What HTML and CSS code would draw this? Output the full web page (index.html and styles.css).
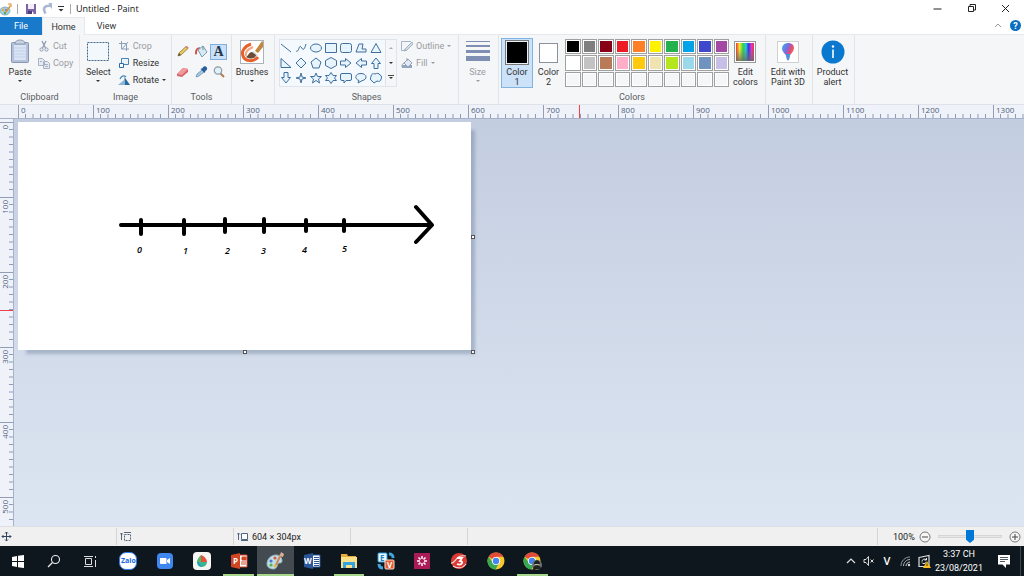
FILE: index.html
```html
<!DOCTYPE html>
<html lang="en">

<head>
  <meta charset="UTF-8">
  <meta name="viewport" content="width=device-width, initial-scale=1.0">
  <title>Untitled - Paint</title>
  <link rel="stylesheet" href="styles.css">
</head>

<body>

  <!-- title bar -->
  <header class="titlebar">
    <svg class="app-icon" width="13" height="14" viewBox="0 0 13 14">
      <ellipse cx="5" cy="9" rx="5" ry="4" fill="#a9cfe0" stroke="#6d9db5" stroke-width=".7" />
      <circle cx="3" cy="8" r="1.2" fill="#e5a73c" />
      <circle cx="5" cy="11" r="1.2" fill="#5aa845" />
      <circle cx="6" cy="8" r="1" fill="#4d79d8" />
      <path d="M6 10 11 3" stroke="#db9540" stroke-width="1.6" />
      <path d="M8 2h3v3" fill="none" stroke="#e9b468" stroke-width="1.4" />
    </svg>
    <span class="bar"></span>
    <button class="plain save" aria-label="Save">
      <svg width="12" height="12" viewBox="0 0 12 12">
        <path d="M1 1h10v10H1z" fill="#7d63a8" />
        <path d="M3 1h6v5H3z" fill="#f1eef8" />
        <path d="M3 8h6v3H3z" fill="#4b3b77" />
        <path d="M7 8.500h1.500V11H7z" fill="#fff" />
      </svg>
    </button>
    <button class="plain undo" aria-label="Undo">
      <svg width="11" height="11" viewBox="0 0 11 11">
        <path d="M3.500 10.500C0 5 3 2 9 3" fill="none" stroke="#a9b7d3" stroke-width="2.600" />
        <path d="M6.500 0H10v6.500z" fill="#a9b7d3" />
      </svg>
    </button>
    <button class="plain more" aria-label="Customize toolbar">
      <svg width="6" height="6" viewBox="0 0 6 6"><path d="M0 .5h6" stroke="#333" /><path d="M.5 3h5L3 5.500z" fill="#333" /></svg>
    </button>
    <span class="bar"></span>
    <h1>Untitled - Paint</h1>
    <div class="window-buttons">
      <button class="plain" aria-label="Minimize"><svg width="9" height="9" viewBox="0 0 9 9"><path d="M.5 5h8" stroke="#222" /></svg></button>
      <button class="plain" aria-label="Restore"><svg width="9" height="9" viewBox="0 0 9 9"><path d="M1.500 2.500h5v5h-5zM3 2V.5h5.500V6H7" fill="none" stroke="#222" /></svg></button>
      <button class="plain" aria-label="Close"><svg width="9" height="9" viewBox="0 0 9 9"><path d="m1 1 7 7M8 1 1 8" stroke="#222" /></svg></button>
    </div>
  </header>

  <!-- tabs -->
  <nav class="tabs">
    <button class="tab file">File</button>
    <button class="tab active">Home</button>
    <button class="tab">View</button>
    <div class="tabs-right">
      <button class="plain" aria-label="Collapse ribbon"><svg width="8" height="5" viewBox="0 0 8 5"><path d="m1 4 3-3 3 3" fill="none" stroke="#999" /></svg></button>
      <button class="plain help" aria-label="Help">?</button>
    </div>
  </nav>

  <!-- ribbon -->
  <div class="ribbon">
    <section class="group clipboard">
      <div class="group-body">
        <button class="big">
          <svg width="24" height="26" viewBox="0 0 24 26">
            <rect x="3.500" y="3.500" width="17" height="20" rx="1" fill="#b4c1d8" stroke="#8797b8" />
            <path d="M6 6h12v15H6z" fill="#d9e4f4" />
            <path d="M6 9h12M6 12h12M6 15h12M6 18h12" stroke="#c3d2e8" />
            <path d="M7 5c0-3 2-4 5-4s5 1 5 4z" fill="#cbd2df" stroke="#8290ad" stroke-width=".8" />
          </svg>
          <span>Paste</span><i class="caret"></i>
        </button>
        <div class="stack">
          <button class="small off">
            <svg width="12" height="12" viewBox="0 0 12 12"><path d="m4 1 3.500 7M8 1 4.500 8" stroke="#8d9bb3" stroke-width="1.300" /><circle cx="3.500" cy="9.500" r="1.600" fill="none" stroke="#8d9bb3" /><circle cx="8.500" cy="9.500" r="1.600" fill="none" stroke="#8d9bb3" /></svg>Cut</button>
          <button class="small off">
            <svg width="12" height="12" viewBox="0 0 12 12"><path d="M.5 1.500h4l2 2v5h-6zM5.500 4.500h4l2 2v5h-6z" fill="#e6ebf3" stroke="#a8b3c6" /><path d="M7 7.500h3M7 9.500h3M2 4.500h2" stroke="#a8b3c6" /></svg>Copy</button>
        </div>
      </div>
      <h2>Clipboard</h2>
    </section>

    <section class="group image">
      <div class="group-body">
        <button class="big">
          <svg width="24" height="26" viewBox="0 0 24 26"><rect x="1.500" y="3.500" width="21" height="18" fill="#f3f8fc" stroke="#3d668e" stroke-dasharray="2 1" /></svg>
          <span>Select</span><i class="caret"></i>
        </button>
        <div class="stack">
          <button class="small off">
            <svg width="12" height="12" viewBox="0 0 12 12"><path d="M3.500 1v8H11M1 3.500h7.500V11M4 9l6-7" fill="none" stroke="#8ea0b9" /></svg>Crop</button>
          <button class="small">
            <svg width="12" height="12" viewBox="0 0 12 12"><path d="M3.500 1.500h7v6h-7z" fill="#eaf4fc" stroke="#4484b8" /><path d="M1.500 6.500h4v4h-4z" fill="#fff" stroke="#2b6ca6" /></svg>Resize</button>
          <button class="small">
            <svg width="12" height="12" viewBox="0 0 12 12"><path d="M0 11h6V6z" fill="#8cb6d4" /><path d="M6.500 3v8H12z" fill="#256b9e" /><path d="M2 5c1-3 4-4 6-2" fill="none" stroke="#3c88bc" stroke-width="1.200" /></svg>Rotate<i class="caret"></i></button>
        </div>
      </div>
      <h2>Image</h2>
    </section>

    <section class="group tools">
      <div class="group-body tool-grid">
        <button class="tool" aria-label="Pencil"><svg width="14" height="14" viewBox="0 0 14 14"><path d="m2 12 1-3 7-6.500 2 2L5 11z" fill="#e8c95e" stroke="#947738" stroke-width=".8" /><path d="m2 12 1-3 2 2z" fill="#554" /><path d="m9.500 3 1.500-1 1.500 1.500-1 1.500z" fill="#cf7d74" /></svg></button>
        <button class="tool" aria-label="Fill with color"><svg width="14" height="14" viewBox="0 0 14 14"><path d="m4 6 5-4 4 6-5 5z" fill="#d7eaf4" stroke="#6892ab" stroke-width=".9" /><path d="M9 2V6M6 4c-3-1-4 2-4 6" stroke="#6892ab" fill="none" /><path d="M6 4C3 3 1 5 1 9c0 2 2 2 2 0 0-3 1-4 3-5z" fill="#d85145" /></svg></button>
        <button class="tool picked letter" aria-label="Text">A</button>
        <button class="tool" aria-label="Eraser"><svg width="14" height="14" viewBox="0 0 14 14"><path d="m1 9 6-6 5 1v3L6 12l-5-1z" fill="#d9646b" /><path d="m1 9 6-6 5 1-6 6z" fill="#ef9a9c" /></svg></button>
        <button class="tool" aria-label="Color picker"><svg width="14" height="14" viewBox="0 0 14 14"><path d="m2 12 1-3 5-4 2 2-5 4z" fill="#a8cae1" stroke="#5b88ad" stroke-width=".7" /><path d="m6.500 4 4 4 1-2c2-1 2-3 1-4s-3-1-4 1z" fill="#2a5f9c" /></svg></button>
        <button class="tool" aria-label="Magnifier"><svg width="14" height="14" viewBox="0 0 14 14"><path d="m8 8 4 4" stroke="#b07c52" stroke-width="2" /><circle cx="6" cy="5.500" r="3.700" fill="#e1f0f9" stroke="#8b9aa8" stroke-width="1.200" /></svg></button>
      </div>
      <h2>Tools</h2>
    </section>

    <section class="group brushes">
      <div class="group-body">
        <button class="big">
          <svg width="24" height="26" viewBox="0 0 24 26">
            <rect x=".5" y="1.500" width="23" height="23" fill="#fff" stroke="#a9b4bf" />
            <path d="M11 5C5 7 1 12 3 17c2 6 11 6 15 1" fill="none" stroke="#e8612c" stroke-width="3" />
            <path d="M13 8c-5 2-8 5-7 9" fill="none" stroke="#f5a47e" stroke-width="2" />
            <path d="m15 12 7-10 1 1v5l-5 6z" fill="#c4853c" />
            <path d="m13 12 5 4-2 2-4-4z" fill="#d4d8dc" />
            <path d="M12 13c-3 0-3 3-6 5 5 3 10 1 10-2z" fill="#6b4c38" />
          </svg>
          <span>Brushes</span><i class="caret"></i>
        </button>
      </div>
    </section>

    <section class="group shapes">
      <div class="group-body">
        <div class="gallery">
          <div class="shape-grid" id="shapes"></div>
          <div class="gallery-scroll">
            <button class="plain" aria-label="Previous row"><i class="caret up"></i></button>
            <button class="plain" aria-label="Next row"><i class="caret"></i></button>
            <button class="plain" aria-label="All shapes"><i class="caret lined"></i></button>
          </div>
        </div>
        <div class="stack">
          <button class="small off">
            <svg width="12" height="12" viewBox="0 0 12 12"><path d="M10 1.500H.5v9h5" fill="none" stroke="#a5b4c8" /><path d="m4 9 7-7 1 2-6 6-3 1z" fill="#d3dce8" stroke="#92a3bb" stroke-width=".8" /></svg>Outline<i class="caret"></i></button>
          <button class="small off">
            <svg width="12" height="12" viewBox="0 0 12 12"><path d="M1 8h10v3H1z" fill="#92a6c2" /><path d="m3 6 4-4 4 4-4 4z" fill="#e3eaf3" stroke="#92a3bb" /><path d="M6 4V1M3 6C1 7 1 8 1 10" fill="none" stroke="#92a3bb" /></svg>Fill<i class="caret"></i></button>
        </div>
      </div>
      <h2>Shapes</h2>
    </section>

    <section class="group size">
      <div class="group-body">
        <button class="big off">
          <svg width="24" height="26" viewBox="0 0 24 26"><path d="M0 2h24v1H0zM0 6h24v2H0zM0 11h24v3H0zM0 17h24v5H0z" fill="#7e8fb3" /></svg>
          <span>Size</span><i class="caret"></i>
        </button>
      </div>
    </section>

    <section class="group colors">
      <div class="group-body">
        <button class="big color-slot chosen"><span class="well first"></span><span>Color</span><span>1</span></button>
        <button class="big color-slot"><span class="well second"></span><span>Color</span><span>2</span></button>
        <div class="palette" id="palette"></div>
        <button class="big edit">
          <svg width="24" height="26" viewBox="0 0 24 26">
            <defs>
              <linearGradient id="hue"><stop offset="0" stop-color="#e33" /><stop offset=".2" stop-color="#ee3" /><stop offset=".4" stop-color="#3c4" /><stop offset=".55" stop-color="#2cd" /><stop offset=".7" stop-color="#33d" /><stop offset=".85" stop-color="#d3c" /><stop offset="1" stop-color="#e34" /></linearGradient>
              <linearGradient id="fade" x2="0" y2="1"><stop offset=".3" stop-color="#777" stop-opacity="0" /><stop offset="1" stop-color="#666" stop-opacity=".8" /></linearGradient>
            </defs>
            <rect x="1.500" y="2.500" width="21" height="21" fill="#fff" stroke="#999" />
            <path d="M3 4h18v18H3z" fill="url(#hue)" /><path d="M3 4h18v18H3z" fill="url(#fade)" />
          </svg>
          <span>Edit</span><span>colors</span>
        </button>
      </div>
      <h2>Colors</h2>
    </section>

    <section class="group paint3d">
      <div class="group-body">
        <button class="big">
          <svg width="24" height="26" viewBox="0 0 24 26">
            <defs><linearGradient id="drop" x1="0" y1="0" x2="1" y2=".6"><stop offset="0" stop-color="#29b8ee" /><stop offset=".45" stop-color="#7b6ae0" /><stop offset=".7" stop-color="#e34a7a" /><stop offset="1" stop-color="#f57c45" /></linearGradient></defs>
            <rect x="1.500" y="2.500" width="21" height="21" fill="#fff" stroke="#d0d0d0" />
            <path d="M12 4c-4 0-6 3-6 5.500 0 3 3 5 4 7l1 4c0 1 2 1 2 0l1-4c1-2 4-4 4-7.500S15.500 4 12 4z" fill="url(#drop)" />
            <path d="m10 15 4 0-1 5.500c0 1-2 1-2 0z" fill="#3a9be8" />
          </svg>
          <span>Edit with</span><span>Paint 3D</span>
        </button>
      </div>
    </section>

    <section class="group alert">
      <div class="group-body">
        <button class="big">
          <svg width="24" height="26" viewBox="0 0 24 26"><circle cx="12" cy="13" r="11.500" fill="#0a78cf" /><circle cx="12" cy="7.500" r="1.200" fill="#fff" /><path d="M12 10.500V19" stroke="#fff" stroke-width="1.600" /></svg>
          <span>Product</span><span>alert</span>
        </button>
      </div>
    </section>
  </div>

  <!-- rulers and canvas -->
  <div class="ruler across" id="across"><i class="pointer"></i></div>
  <main class="workspace">
    <div class="ruler down" id="down"><i class="pointer"></i></div>
    <div class="desk">
      <div class="canvas">
        <svg width="453" height="228" viewBox="0 0 453 228">
          <g fill="none" stroke="#000" stroke-width="4" stroke-linecap="round" stroke-linejoin="round">
            <path d="M103 103h310M398 85l16 18-16 17" />
            <path d="M123 98v14M166 98v14M207 97v13M246 97v13M288 98v11M326 98v11" />
          </g>
          <g class="numbers">
            <text x="119" y="131">0</text>
            <text x="165" y="132">1</text>
            <text x="207" y="132">2</text>
            <text x="243" y="132">3</text>
            <text x="284" y="131">4</text>
            <text x="324" y="130">5</text>
          </g>
        </svg>
        <i class="handle right"></i>
        <i class="handle bottom"></i>
        <i class="handle corner"></i>
      </div>
    </div>
  </main>

  <!-- status bar -->
  <footer class="status">
    <div class="cell"><svg width="11" height="11" viewBox="0 0 11 11"><path d="M5.500 1v9M1 5.500h9M4 2.500 5.500 1 7 2.500M4 8.500 5.500 10 7 8.500M2.500 4 1 5.500 2.500 7M8.500 4 10 5.500 8.500 7" fill="none" stroke="#34465c" /></svg></div>
    <div class="cell"><svg width="12" height="12" viewBox="0 0 12 12"><path d="M1.500 9V2M0 3.500 1.500 2 3 3.500M4 1.500h7" fill="none" stroke="#53657a" /><path d="M4.500 3.500h6v6h-6z" fill="none" stroke="#53657a" stroke-dasharray="2 1" /></svg></div>
    <div class="cell"><svg width="12" height="12" viewBox="0 0 12 12"><path d="M1.500 9V2M0 3.500 1.500 2 3 3.500" fill="none" stroke="#53657a" /><path d="M4.500 2.500h6v6h-6z" fill="#fff" stroke="#4c6886" /><path d="M4 9.500h7" stroke="#53657a" /></svg>604 × 304px</div>
    <div class="cell"></div>
    <div class="cell wide"></div>
    <div class="zoom">
      <label for="zoom">100%</label>
      <button class="plain" aria-label="Zoom out"><svg width="12" height="12" viewBox="0 0 12 12"><circle cx="6" cy="6" r="5" fill="#f7f7f7" stroke="#777" /><path d="M3 6h6" stroke="#444" /></svg></button>
      <input type="range" id="zoom" min="0" max="100" value="50">
      <button class="plain" aria-label="Zoom in"><svg width="12" height="12" viewBox="0 0 12 12"><circle cx="6" cy="6" r="5" fill="#f7f7f7" stroke="#777" /><path d="M3 6h6M6 3v6" stroke="#444" /></svg></button>
    </div>
  </footer>

  <!-- taskbar -->
  <nav class="taskbar">
    <div class="system">
      <button class="task" aria-label="Start"><svg width="14" height="14" viewBox="0 0 14 14"><path d="M1 3l5-1v5H1zM7 1.800l6-.8v6H7zM1 8h5v5l-5-1zM7 8h6v6l-6-.8z" fill="#fff" /></svg></button>
      <button class="task" aria-label="Search"><svg width="14" height="14" viewBox="0 0 14 14"><circle cx="8.500" cy="5.500" r="4" fill="none" stroke="#eee" stroke-width="1.100" /><path d="m5.500 8.500-4.500 4.500" stroke="#eee" stroke-width="1.200" /></svg></button>
      <button class="task" aria-label="Task view"><svg width="14" height="14" viewBox="0 0 14 14"><path d="M2.500 4.500h6v6h-6zM1 2.500h9M1 12.500h9M12.500 2v2M12.500 6v7" fill="none" stroke="#ddd" /></svg></button>
    </div>
    <div class="apps">
      <button class="task"><span class="zalo">Zalo</span></button>
      <button class="task" aria-label="Zoom"><svg width="18" height="18" viewBox="0 0 18 18"><rect x="1" y="1" width="16" height="16" rx="4" fill="#3f86ee" /><path d="M4 6h5.500q1 0 1 1v5H5q-1 0-1-1zM11 8l3-2v6l-3-2z" fill="#fff" /></svg></button>
      <button class="task" aria-label="Color app"><svg width="18" height="18" viewBox="0 0 18 18"><rect width="18" height="18" rx="4" fill="#f6f6f4" /><path d="M8 3c-3 3-4 5-4 7h5z" fill="#4dba6c" /><path d="M8 3c3 1 6 4 6 7H8z" fill="#e8513d" /><path d="M4 10h5v5c-3 0-5-2-5-5z" fill="#28a2b0" /><path d="M9 15a5 5 0 0 0 5-5H6z" fill="#3bb591" /></svg></button>
      <button class="task open" aria-label="PowerPoint"><svg width="18" height="18" viewBox="0 0 18 18"><path d="M8 3h9v12H8z" fill="#fff" stroke="#d14424" /><path d="M12 5h4v3h-4zM11 10h5M11 12h5" fill="#d14424" stroke="#d14424" /><path d="m1 3 9-2v16l-9-2z" fill="#d14424" /><text x="3" y="12" class="office">P</text></svg></button>
      <button class="task open current" aria-label="Paint"><svg width="20" height="20" viewBox="0 0 20 20"><path d="M2 13c0-5 4-9 9-9 4 0 6 3 6 6 0 2-2 2-3 2-2 0-1 5-5 6-4 0-7-2-7-5z" fill="#bfdde6" stroke="#93b5c4" /><circle cx="6" cy="10" r="1.600" fill="#4c76cd" /><circle cx="10" cy="7" r="1.600" fill="#da5848" /><circle cx="6" cy="14" r="1.600" fill="#59b04c" /><circle cx="10" cy="15" r="1.400" fill="#e6b93b" /><path d="m11 14 5-11" stroke="#cd8856" stroke-width="2" /><path d="m15 5 1-4 3 2-1 3z" fill="#ddb09a" /></svg></button>
      <button class="task" aria-label="Word"><svg width="18" height="18" viewBox="0 0 18 18"><path d="M8 3h9v12H8z" fill="#fff" stroke="#2b579a" /><path d="M11 5.500h5M11 7.500h5M11 9.500h5M11 11.500h5M11 13.500h5" stroke="#2b579a" /><path d="m1 3 9-2v16l-9-2z" fill="#2b579a" /><text x="1" y="12" class="office">W</text></svg></button>
      <button class="task open" aria-label="File Explorer"><svg width="18" height="18" viewBox="0 0 18 18"><path d="M1 2h6l1 2h8v3H1z" fill="#e6ad3d" /><path d="M1 5h16v11H1z" fill="#fbe08a" /><path d="M3 10h12v6h-3v-3H6v3H3z" fill="#33a4dd" /></svg></button>
      <button class="task" aria-label="EVKey"><svg width="18" height="18" viewBox="0 0 18 18"><path d="M12 2c4 0 4 2 4 4M2 12c0 3 2 4 4 4" fill="none" stroke="#3da7de" stroke-width="3" /><rect x="1" y="1" width="9" height="9" rx="1" fill="#eef8ff" stroke="#299bd6" /><rect x="8" y="8" width="9" height="9" rx="1" fill="#e55a32" stroke="#f8ddce" /><text x="3" y="9" class="key-e">E</text><text x="10" y="16" class="key-v">V</text></svg></button>
      <button class="task" aria-label="Screen tool"><svg width="18" height="18" viewBox="0 0 18 18"><path d="M1 1h16v16H1z" fill="#ac1b58" /><path d="M9 4v3M9 11v3M4 9h3M11 9h3M5.500 5.500l2 2M10.500 10.500l2 2M12.500 5.500l-2 2M7.500 10.500l-2 2" stroke="#fff" stroke-width="1.500" /></svg></button>
      <button class="task" aria-label="Garena"><svg width="18" height="18" viewBox="0 0 18 18"><circle cx="9" cy="9" r="8" fill="#db3a35" /><path d="M1 11C6 12 5 2 16 4M3 14c5 3 10 2 13-2" fill="none" stroke="#f6d8ce" stroke-width="1.200" /><path d="M7 6h5L10 9c4 0 2 5-3 3" fill="none" stroke="#fff" stroke-width="1.800" /></svg></button>
      <button class="task" aria-label="Chrome"><svg width="18" height="18" viewBox="0 0 18 18"><g id="chrome"><circle cx="9" cy="9" r="8.500" fill="#f7c92f" /><path d="M9 9 1.600 4.800A8.500 8.500 0 0 1 16.400 4.800H9z" fill="#e04b3b" /><path d="M1.600 4.800A8.500 8.500 0 0 0 8.500 17.500L12 11 9 9 6 11z" fill="#38a853" /><circle cx="9" cy="9" r="4" fill="#fff" /><circle cx="9" cy="9" r="3.200" fill="#4285f4" /></g></svg></button>
      <button class="task open" aria-label="Chrome profile"><svg width="20" height="18" viewBox="0 0 20 18"><use href="#chrome" /><circle cx="14" cy="13" r="5" fill="#6d746f" /><path d="M10 17c0-5 8-5 8 0z" fill="#20221f" /><path d="M11 12c0-5 6-5 6 0z" fill="#20221f" /><path d="M12 12h4v1h-4z" fill="#c3b29f" /></svg></button>
    </div>
    <div class="tray">
      <button class="plain" aria-label="Show hidden icons"><svg width="12" height="12" viewBox="0 0 12 12"><path d="m2 8 4-4 4 4" fill="none" stroke="#ddd" stroke-width="1.200" /></svg></button>
      <button class="plain" aria-label="Volume muted"><svg width="12" height="12" viewBox="0 0 12 12"><path d="M1 4.500h2l2.500-3v9L3 7.500H1zM7.500 4.500l3 3M10.500 4.500l-3 3" fill="none" stroke="#ddd" /></svg></button>
      <button class="plain input-mode">V</button>
      <button class="plain" aria-label="Network"><svg width="12" height="12" viewBox="0 0 12 12"><g fill="none" stroke="#8c9499"><path d="M2 11C2 6 6 2 11 2" /><path d="M4.500 11C4.500 7.500 7.500 4.500 11 4.500" stroke="#bbb" /><path d="M7 11c0-2 2-4 4-4" stroke="#ddd" /></g><circle cx="10" cy="10" r="1.200" fill="#ddd" /></svg></button>
      <button class="plain" aria-label="Sync warning"><svg width="14" height="14" viewBox="0 0 14 14"><path d="M2 3.500 12 1.500v11H2z" fill="none" stroke="#ddd" stroke-width="1.200" /><path d="M9 5.500c-2-1-4 0-4 2M5 8.500c1 2 3 1 4 0M9.500 4v2h-2" fill="none" stroke="#eee" /><path d="m10 7 4 7H6z" fill="#f7bd20" /><path d="M10 9.500V12" stroke="#463300" /></svg></button>
      <time class="clock" datetime="2021-08-23T15:37"><span>3:37 CH</span><span>23/08/2021</span></time>
      <button class="plain notes" aria-label="Notifications"><svg width="14" height="14" viewBox="0 0 14 14"><path d="M1 1h12v9.500H9V14l-3.500-3.500H1z" fill="#fff" /><path d="M3 3.500h8M3 5.500h8M3 7.500h5" stroke="#253038" stroke-width=".8" /></svg></button>
    </div>
  </nav>

  <script>
    const shapes = [
      ['Line', 'M1 2l10 8'],
      ['Curve', 'M1 9c3 2 3-7 5-4s3 4 5-3'],
      ['Oval', 'M.5 6a5.500 4 0 1 0 11 0a5.500 4 0 1 0-11 0'],
      ['Rectangle', 'M.5 1.500h11v9H.5z'],
      ['Rounded rectangle', 'M2.500 1.500h7q2 0 2 2v5q0 2-2 2h-7q-2 0-2-2v-5q0-2 2-2z'],
      ['Polygon', 'M4 2h4L7 7h4v3H1z'],
      ['Triangle', 'M6 1.500l5 9H1z'],
      ['Right triangle', 'M1 1.500V10.500h10z'],
      ['Diamond', 'M6 1l5 5-5 5-5-5z'],
      ['Pentagon', 'M6 1l5 4-2 6H3L1 5z'],
      ['Hexagon', 'M6 .5l5.500 3v5L6 11.500.5 8.500v-5z'],
      ['Right arrow', 'M.5 4h5V1.500L11 6l-5.500 4.500V8h-5z'],
      ['Left arrow', 'M11.500 4h-5V1.500L1 6l5.500 4.500V8h5z'],
      ['Up arrow', 'M4 11.500v-5H1.500L6 1l4.500 5.500H8v5z'],
      ['Down arrow', 'M4 .5v5H1.500L6 11l4.500-5.500H8v-5z'],
      ['Four-point star', 'M6 1l1 4 4 1-4 1-1 4-1-4-4-1 4-1z'],
      ['Five-point star', 'M6 1l1.500 3.500H11.500L8.500 7l1 4L6 8.500 2.500 11l1-4L.5 4.500h4z'],
      ['Six-point star', 'M6 .5l2 3h3.500L9.500 6l2 2.500H8l-2 3-2-3H.5L2.500 6l-2-2.500H4z'],
      ['Rounded callout', 'M2 1.500h8q1.500 0 1.500 1.500v4q0 1.500-1.500 1.500H6l-2 2.500v-2.500H2Q.5 8.500.5 7V3Q.5 1.500 2 1.500z'],
      ['Oval callout', 'M4 8.500C-1 7 0 1.500 6 1.500s7 6 1 7.200L3 11z'],
      ['Cloud callout', 'M2 9c-2-1-2-3-1-4C1 2 3 1 5 2c2-1 4-1 5 1 2 1 2 3 1 4 0 2-2 3-4 2L4 11z']
    ]

    document.querySelector('#shapes').innerHTML = shapes.map(([name, d]) =>
      `<button class="shape" aria-label="${name}"><svg width="12" height="12" viewBox="0 0 12 12"><path d="${d}"/></svg></button>`).join('')

    const colors = [
      '#000000', '#7f7f7f', '#880015', '#ed1c24', '#ff7f27', '#fff200', '#22b14c', '#00a2e8', '#3f48cc', '#a349a4',
      '#ffffff', '#c3c3c3', '#b97a57', '#ffaec9', '#ffc90e', '#efe4b0', '#b5e61d', '#99d9ea', '#7092be', '#c8bfe7'
    ]

    // last row holds the custom colors, still empty
    let swatches = ''
    for (let i = 0; i < 30; i++) {
      swatches += `<button class="swatch" aria-label="Color ${i + 1}" style="background-color:${colors[i] || '#f5f6f7'}"></button>`
    }
    document.querySelector('#palette').innerHTML = swatches

    // one ruler mark every 100 units, 9 small ticks in between
    function drawRuler(id, vertical) {
      const ruler = document.querySelector(id)
      const length = vertical ? ruler.clientHeight : ruler.clientWidth
      let marks = ''
      for (let i = 0; i * 75 < length - 30; i++) {
        let d = ''
        for (let j = 1; j < 10; j++) {
          d += vertical ? `M0 ${j * 7.5}h4` : `M${j * 7.5} 0v4`
        }
        const size = vertical ? 'width="4" height="75"' : 'width="75" height="4"'
        marks += `<div class="mark"><span>${i * 100}</span><svg ${size}><path d="${d}"/></svg></div>`
      }
      ruler.insertAdjacentHTML('beforeend', marks)
    }
    drawRuler('#across', false)
    drawRuler('#down', true)
  </script>
</body>

</html>
```
FILE: styles.css
```css
* {
  box-sizing: border-box;
  margin: 0;
  padding: 0;
}

body {
  display: flex;
  flex-direction: column;
  height: 100vh;
  overflow: hidden;
  background: #fff;
  color: #333;
  font-family: "Open Sans", "Noto Sans", sans-serif;
  font-size: 8px;
  line-height: 10px;
}

button {
  border: 0;
  background: none;
  color: inherit;
  font: inherit;
}

svg {
  display: block;
  flex: none;
}

h1,
h2 {
  font-size: 9px;
  font-weight: 400;
}

.plain {
  display: flex;
  align-items: center;
  justify-content: center;
}

/* title bar */
.titlebar {
  display: flex;
  flex: none;
  align-items: center;
  height: 17px;
}

.titlebar h1 {
  margin-left: 5px;
  color: #111;
}

.bar {
  width: 1px;
  height: 10px;
  margin-left: 4px;
  background: #aaa;
}

.save {
  margin-left: 7px;
}

.undo {
  margin-left: 5px;
}

.more {
  margin: 0 2px 0 5px;
}

.window-buttons {
  display: flex;
  margin: 0 2px 0 auto;
}

.window-buttons button {
  width: 34px;
  height: 16px;
}

/* tabs */
.tabs {
  display: flex;
  flex: none;
  height: 18px;
  border-bottom: 1px solid #e6e8eb;
  font: 9px/10px Roboto, sans-serif;
}

.tab {
  width: 43px;
  height: 18px;
}

.file {
  width: 42px;
  background: #1979ca;
  color: #fff;
}

.active {
  border: 1px solid #e6e8eb;
  border-bottom: 0;
  background: #f5f6f7;
}

.tabs-right {
  display: flex;
  align-items: center;
  gap: 8px;
  margin-left: auto;
  padding-right: 3px;
}

.help {
  width: 11px;
  height: 11px;
  border-radius: 50%;
  background: #0a6fc2;
  color: #fff;
  font-weight: 700;
}

/* ribbon */
.ribbon {
  display: flex;
  flex: none;
  height: 69px;
  background: #f5f6f7;
  font: 9px/10px Roboto, sans-serif;
}

.group {
  display: flex;
  flex: none;
  flex-direction: column;
  border-right: 1px solid #e2e4e7;
}

.group-body {
  display: flex;
  flex: 1;
  align-items: flex-start;
  padding-top: 3px;
}

.group h2 {
  height: 12px;
  color: #5a5d63;
  text-align: center;
}

.big {
  display: flex;
  flex-direction: column;
  align-items: center;
  padding-top: 1px;
}

.big svg {
  margin-bottom: 2px;
}

.off {
  color: #999ca3;
}

.caret {
  display: block;
  margin-top: 3px;
  border: 2px solid transparent;
  border-top-color: currentColor;
  border-bottom: 0;
}

.stack {
  display: flex;
  flex-direction: column;
  margin-left: 6px;
  gap: 1px;
}

.small {
  display: flex;
  align-items: center;
  gap: 3px;
  height: 16px;
}

.small .caret {
  margin-top: 0;
}

.clipboard {
  width: 80px;
  padding-left: 8px;
}

.clipboard h2 {
  margin-left: -8px;
}

.image {
  width: 92px;
  padding-left: 6px;
}

.image h2 {
  margin-left: -6px;
}

.image .stack {
  margin-left: 7px;
}

.tools {
  width: 60px;
}

.tool-grid {
  display: grid;
  grid-template-columns: repeat(3, 17px);
  grid-auto-rows: 17px;
  gap: 4px 1px;
  padding: 9px 0 0 2px;
}

.tool {
  display: grid;
  place-items: center;
}

.picked {
  border: 1px solid #7eb1e3;
  background: #c9e0f7;
}

.letter {
  color: #23364f;
  font: 700 14px/14px "Liberation Serif", serif;
}

.brushes {
  width: 43px;
  padding-right: 2px;
}

.brushes .group-body,
.size .group-body,
.paint3d .group-body,
.alert .group-body {
  justify-content: center;
}

.shapes {
  width: 184px;
}

.shapes .group-body {
  padding-left: 4px;
}

.shapes .stack {
  margin-left: 4px;
}

.gallery {
  display: flex;
  height: 48px;
  margin-top: 1px;
  border: 1px solid #dfe4ea;
  background: #f3f9fd;
}

.shape-grid {
  display: grid;
  grid-template-columns: repeat(7, 15px);
  grid-template-rows: repeat(3, 15px);
}

.shape {
  display: grid;
  place-items: center start;
}

.shape path {
  fill: #e8f4fc;
  stroke: #3f6f9e;
}

.shape:first-child path,
.shape:nth-child(2) path {
  fill: none;
}

.gallery-scroll {
  display: grid;
  width: 11px;
  border-left: 1px solid #dfe4ea;
  background: #f5f6f7;
}

.gallery-scroll .caret {
  margin: 0;
}

.gallery-scroll .up {
  border: 2px solid transparent;
  border-top: 0;
  border-bottom-color: #aaa;
}

.lined::before {
  content: "";
  display: block;
  width: 6px;
  height: 1px;
  margin: -4px -3px 0;
  background: #444;
}

.size {
  width: 40px;
  padding-right: 2px;
}

.colors {
  width: 267px;
}

.color-slot {
  width: 32px;
  height: 50px;
  margin-left: 2px;
  border: 1px solid transparent;
}

.color-slot + .color-slot {
  width: 31px;
  margin-left: 0;
}

.chosen {
  border-color: #82b3e3;
  background: #cbe2f8;
}

.well {
  border: 1px solid #8b929b;
  outline: 0;
  background: #fff;
}

.first {
  width: 24px;
  height: 25px;
  margin-bottom: 2px;
  border-color: #777;
  box-shadow: inset 0 0 0 1px #e9f2fb;
  background: #000;
}

.second {
  width: 19px;
  height: 20px;
  margin: 3px 0 4px;
}

.palette {
  display: grid;
  grid-template-columns: repeat(10, 1fr);
  grid-template-rows: repeat(3, 1fr);
  gap: 1px;
  width: 164px;
  height: 48px;
  margin: 1px 0 0 1px;
}

.swatch {
  border: 1px solid #a0a0a0;
  box-shadow: inset 0 0 0 1px #fff;
}

.edit {
  margin-left: 4px;
}

.paint3d {
  width: 47px;
  padding-right: 2px;
}

.alert {
  width: 42px;
  padding-right: 2px;
}

/* rulers */
.ruler {
  position: relative;
  display: flex;
  flex: none;
  overflow: hidden;
  background: #f0f2f9;
  color: #4d5f7c;
}

.mark {
  position: relative;
  flex: none;
}

.mark svg {
  position: absolute;
  right: 0;
  bottom: 0;
}

.mark path {
  stroke: #8e9bb5;
}

.pointer {
  position: absolute;
  z-index: 1;
  background: #f04048;
}

.across {
  height: 15px;
  padding-left: 18px;
  border-top: 1px solid #dfe2e8;
  border-bottom: 1px solid #a6b2c9;
}

.across .mark {
  width: 75px;
  padding-left: 2px;
  border-left: 1px solid #929eb5;
}

.across .pointer {
  top: 0;
  left: 579px;
  width: 1px;
  height: 14px;
}

.down {
  flex-direction: column;
  width: 14px;
  padding-top: 3px;
  border-right: 1px solid #a6b2c9;
}

.down .mark {
  height: 75px;
  padding-top: 2px;
  border-top: 1px solid #929eb5;
}

/* numbers read from bottom to top */
.down span {
  display: block;
  width: 10px;
  writing-mode: vertical-rl;
  transform: rotate(180deg);
}

.down .pointer {
  top: 191px;
  left: 0;
  width: 14px;
  height: 1px;
}

/* canvas */
.workspace {
  display: flex;
  flex: 1;
  min-height: 0;
}

.desk {
  flex: 1;
  padding: 3px 0 0 4px;
  background: linear-gradient(#c3cde0, #dce6f2);
}

.canvas {
  position: relative;
  width: 453px;
  background: #fff;
  box-shadow: 6px 6px 3px -2px rgba(90, 108, 140, .35);
}

.numbers {
  fill: #000;
  font: italic 600 9px "Open Sans", sans-serif;
}

.handle {
  position: absolute;
  width: 4px;
  height: 4px;
  border: 1px solid #555;
  background: #fff;
}

.right {
  top: 113px;
  right: -4px;
}

.bottom {
  bottom: -4px;
  left: 225px;
}

.corner {
  right: -4px;
  bottom: -4px;
}

/* status bar */
.status {
  display: flex;
  flex: none;
  align-items: center;
  height: 20px;
  border-top: 1px solid #dcdfe3;
  background: #f0f0f0;
  color: #222;
  font: 9px/10px Roboto, sans-serif;
}

.cell {
  display: flex;
  align-items: center;
  gap: 3px;
  width: 117px;
  height: 17px;
  padding-left: 3px;
  border-right: 1px solid #d5d5d5;
}

.cell:first-child {
  padding-left: 1px;
}

.wide {
  flex: 1;
}

.zoom {
  display: flex;
  align-items: center;
  padding: 0 3px 0 15px;
}

.zoom label {
  width: 26px;
}

.zoom input {
  width: 64px;
  height: 14px;
  margin: 0 7px;
  background: none;
  appearance: none;
}

.zoom input::-webkit-slider-runnable-track {
  height: 3px;
  border: 1px solid #d6d6d6;
  background: #e7e7e7;
}

.zoom input::-webkit-slider-thumb {
  width: 8px;
  height: 13px;
  margin-top: -6px;
  background: #0078d7;
  appearance: none;
  clip-path: polygon(0 0, 100% 0, 100% 75%, 50% 100%, 0 75%);
}

/* taskbar */
.taskbar {
  display: flex;
  flex: none;
  height: 30px;
  background: #0d171d;
  color: #fff;
}

.system {
  display: grid;
  grid-template-columns: repeat(3, 36px);
}

.apps {
  display: grid;
  grid-template-columns: repeat(12, 1fr);
  width: 441px;
  margin-left: 2px;
}

.task {
  position: relative;
  display: grid;
  place-items: center;
}

.open::after {
  content: "";
  position: absolute;
  right: 3px;
  bottom: 0;
  left: 3px;
  height: 2px;
  background: #a5d68b;
}

.current {
  background: #434b50;
}

.current::after {
  right: 0;
  left: 0;
}

.zalo {
  width: 18px;
  height: 18px;
  border: 1px solid #2b7de9;
  border-radius: 7px;
  background: #fff;
  color: #1467e0;
  font-size: 7px;
  font-weight: 700;
  line-height: 16px;
}

.office {
  fill: #fff;
  font-size: 8px;
  font-weight: 700;
}

.key-e,
.key-v {
  fill: #1c86c6;
  font-size: 8px;
  font-weight: 700;
}

.key-v {
  fill: #fff;
}

.tray {
  display: flex;
  align-items: center;
  gap: 6px;
  margin-left: auto;
}

.input-mode {
  width: 12px;
  font-size: 11px;
  font-weight: 600;
}

.clock {
  display: flex;
  flex-direction: column;
  align-items: center;
  width: 44px;
  font: 9px/14px Roboto, sans-serif;
}

.notes {
  width: 34px;
  height: 30px;
  margin-right: 3px;
  border-right: 1px solid #3c454a;
}
```
